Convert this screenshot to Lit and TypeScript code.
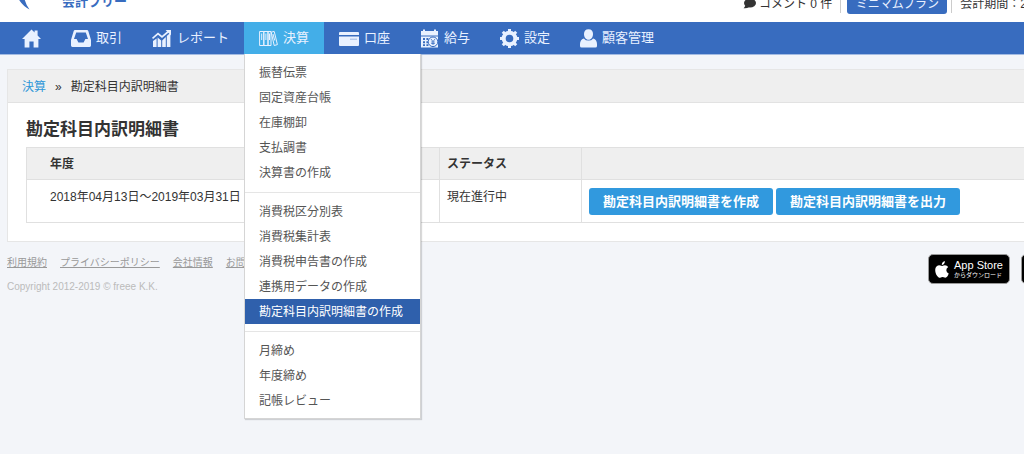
import { LitElement, html, css, svg } from "lit";
import { customElement, state } from "lit/decorators.js";

const glyphs = {
  home: {
    w: 19,
    art: svg`<path d="M9.5 0.5 L0 10 H2.6 V18.5 H7.4 V12.4 H11.6 V18.5 H16.4 V10 H19 L15.6 6.4 V1.6 H12.6 V3.5 Z"/>`,
  },
  tray: {
    w: 20,
    art: svg`<path fill-rule="evenodd" d="M4 1 H16 Q17 1 17.3 2 L20 11 V16.6 Q20 18 18.6 18 H1.4 Q0 18 0 16.6 V11 L2.7 2 Q3 1 4 1 Z M5.2 3.4 L3 10 H5.6 L7.4 13.4 H12.6 L14.4 10 H17 L14.8 3.4 Z"/>`,
  },
  chart: {
    w: 20,
    art: svg`<path d="M1 12 L4.6 9.4 V18 H1 Z M5.6 8.6 L9.2 11.400 V18 H5.6 Z M10.2 11.4 L13.8 8 V18 H10.2 Z M14.8 7 L18.4 3.8 V18 H14.8 Z"/>
      <path d="M0.5 9.4 L6 4.6 L10 8 L17 2" fill="none" stroke="currentColor" stroke-width="1.7"/>
      <path d="M13.6 1 H19 V6.4 Z"/>`,
  },
  books: {
    w: 19,
    art: svg`<g fill="none" stroke="currentColor" stroke-width="1">
      <path d="M.6 2.5 H4.8 V16.5 H.6 Z M4.8 2.5 H9 V16.5 H4.8 Z M9 2.5 H12 V16.5 H9 Z M12.2 3.2 L15.2 2.4 L18.4 15.6 L15.2 16.5 Z"/>
      <path d="M2.7 4.5 V11 M6.9 4.5 V11 M10.5 4.5 V11 M14 5 L15.7 11.5"/></g>`,
  },
  card: {
    w: 20,
    art: svg`<path d="M1 3 H19 Q20 3 20 4 V6 H0 V4 Q0 3 1 3 Z"/>
      <path d="M0 7.4 H20 V16 Q20 17 19 17 H1 Q0 17 0 16 Z"/>
      <path d="M11 10.2 H18" stroke="#9db8e4" stroke-width="1" fill="none"/>`,
  },
  payroll: {
    w: 19,
    art: svg`<path d="M1 2 H3 V.6 H5 V2 H14 V.6 H16 V2 H18 V6.4 H1 Z"/>
      <path fill-rule="evenodd" d="M1 7.4 H18 V18.4 H1 Z M3 9 V11 H5 V9 Z M6.4 9 V11 H8.4 V9 Z M3 12.2 V14.2 H5 V12.2 Z M3 15.2 V17 H5 V15.2 Z M6.4 12.2 V14.2 H8 V12.2 Z M6.4 15.2 V17 H8.4 V15.2 Z"/>
      <circle cx="13" cy="12.8" r="4.8" fill="#e9f1ff" stroke="#386cbf" stroke-width="1"/>
      <path d="M11 10 L13 12.6 L15 10 M13 12.6 V16 M11.2 13 H14.8 M11.2 14.5 H14.8" fill="none" stroke="#386cbf" stroke-width=".8"/>`,
  },
  gear: {
    w: 19,
    art: svg`<circle cx="9.5" cy="9.5" r="5.8" fill="none" stroke="currentColor" stroke-width="4"/>
      <path d="M9.5 0 V4 M9.5 15 V19 M0 9.5 H4 M15 9.5 H19 M2.8 2.8 L5 5 M14 14 L16.2 16.2 M16.2 2.8 L14 5 M5 14 L2.8 16.2" stroke="currentColor" stroke-width="3" fill="none"/>`,
  },
  user: {
    w: 17,
    art: svg`<path d="M8.5 0.2 C11.4 .2 13 2.2 13 5 C13 8 11.3 10.8 8.5 10.8 C5.7 10.8 4 8 4 5 C4 2.2 5.6 .2 8.5 .2 Z"/>
      <path d="M3.8 9.4 Q5.6 11.6 8.5 11.6 Q11.4 11.6 13.2 9.4 Q17 10.8 17 15 V17 Q17 18.6 15.4 18.6 H1.6 Q0 18.6 0 17 V15 Q0 10.8 3.8 9.4 Z"/>`,
  },
};

type GlyphName = keyof typeof glyphs;

const glyph = (name: GlyphName) => {
  const g = glyphs[name];
  return html`<svg class="glyph" width=${g.w} height="19" viewBox="0 0 ${g.w} 19" fill="currentColor" aria-hidden="true">${g.art}</svg>`;
};

const navItems: { icon: GlyphName; label: string; menu?: string[][] }[] = [
  { icon: "home", label: "" },
  { icon: "tray", label: "取引" },
  { icon: "chart", label: "レポート" },
  {
    icon: "books",
    label: "決算",
    menu: [
      ["振替伝票", "固定資産台帳", "在庫棚卸", "支払調書", "決算書の作成"],
      ["消費税区分別表", "消費税集計表", "消費税申告書の作成", "連携用データの作成", "勘定科目内訳明細書の作成"],
      ["月締め", "年度締め", "記帳レビュー"],
    ],
  },
  { icon: "card", label: "口座" },
  { icon: "payroll", label: "給与" },
  { icon: "gear", label: "設定" },
  { icon: "user", label: "顧客管理" },
];

@customElement("global-nav")
class GlobalNav extends LitElement {
  @state() private open = "決算";
  @state() private current = "勘定科目内訳明細書の作成";

  static styles = css`
    :host { display: block; }
    a { text-decoration: none; color: inherit; }
    .bar {
      display: flex;
      margin: 0;
      padding: 0 7px;
      list-style: none;
      background: #386cbf;
      border-bottom: 1px solid #a3bbe2;
      color: #e9f1ff;
    }
    .item { position: relative; }
    .tab {
      display: flex;
      align-items: center;
      gap: 5px;
      height: 32px;
      padding: 0 15px;
      font-size: 13px;
      line-height: 20px;
      white-space: nowrap;
    }
    .tab.open { background: #43aee8; }
    .glyph { flex: none; display: block; }
    .menu {
      position: absolute;
      z-index: 2;
      top: 100%;
      left: 0;
      box-sizing: border-box;
      min-width: 177px;
      padding: 6px 0 5px;
      background: #fff;
      border: 1px solid #d5d5d5;
      border-top: 0;
      box-shadow: 1px 1px 1px rgba(0, 0, 0, 0.15);
      color: #555;
    }
    .group { margin: 0; padding: 0; list-style: none; }
    .group + .group {
      margin-top: 7px;
      padding-top: 6px;
      border-top: 1px solid #e5e5e5;
    }
    .entry {
      display: block;
      padding: 2px 14px 0;
      font-size: 12px;
      line-height: 23px;
      white-space: nowrap;
    }
    .entry.current { background: #2f60ac; color: #fff; }
  `;

  render() {
    return html`<nav>
      <ul class="bar">
        ${navItems.map(
          (n) => html`<li class="item">
            <a href="#" class="tab ${n.label === this.open ? "open" : ""}" aria-label=${n.label || "ホーム"}
              >${glyph(n.icon)}${n.label ? html`<span>${n.label}</span>` : null}</a>
            ${n.menu && n.label === this.open
              ? html`<div class="menu">
                  ${n.menu.map(
                    (g) => html`<ul class="group">
                      ${g.map(
                        (e) => html`<li><a href="#" class="entry ${e === this.current ? "current" : ""}"
                          @click=${() => (this.current = e)}>${e}</a></li>`
                      )}
                    </ul>`
                  )}
                </div>`
              : null}
          </li>`
        )}
      </ul>
    </nav>`;
  }
}

@customElement("app-root")
class AppRoot extends LitElement {
  static styles = css`
    :host {
      display: block;
      min-height: 100vh;
      overflow-x: clip;
      background: #f3f5f9;
      color: #333;
      font-family: "Liberation Sans", "Noto Sans CJK JP", sans-serif;
      font-size: 12px;
      line-height: 18px;
    }
    .page { min-width: 1130px; }
    .top {
      display: flex;
      align-items: flex-end;
      justify-content: space-between;
      height: 22px;
      overflow: hidden;
      background: #fff;
    }
    .brand {
      display: flex;
      align-items: flex-end;
      gap: 22px;
      padding: 0 0 11px 10px;
      color: #386cbf;
      text-decoration: none;
    }
    .brand-name { font-size: 13px; font-weight: bold; line-height: 18px; }
    .tools {
      display: flex;
      align-items: center;
      width: 387px;
      padding-bottom: 8px;
      white-space: nowrap;
    }
    .comments { display: flex; align-items: center; gap: 3px; padding-right: 8px; border-right: 1px solid #ccc; }
    .plan {
      margin: 0 4px 0 6px;
      padding: 2px 0 0;
      width: 100px;
      height: 22px;
      border: 0;
      border-radius: 3px;
      background: #386cbf;
      color: #e9f1ff;
      font: inherit;
    }
    .period { padding-left: 8px; border-left: 1px solid #ccc; }
    .comments, .period { padding-top: 2px; }
    .main { padding: 14px 7px 0; }
    .panel { border: 1px solid #e6e6e6; background: #fff; }
    .crumbs {
      padding: 8px 14px 6px;
      background: #efefef;
      border-bottom: 1px solid #e2e2e2;
    }
    .crumbs a { color: #2e97d8; text-decoration: none; }
    .sep { padding: 0 9px; }
    .body { padding: 15px 18px 18px; }
    h1 { margin: 0 0 5px; font-size: 17px; line-height: 24px; }
    table { width: 100%; table-layout: fixed; border-collapse: collapse; }
    th, td {
      padding: 7px;
      border: 1px solid #e0e0e0;
      text-align: left;
      vertical-align: top;
    }
    th { background: #efefef; padding-bottom: 6px; }
    td { background: #fff; padding-top: 8px; }
    .year { width: 382px; padding-left: 23px; }
    .status { width: 127px; }
    .actions { display: flex; gap: 3px; }
    .action {
      height: 27px;
      padding: 0 14px;
      border: 0;
      border-radius: 3px;
      background: #3199de;
      color: #fff;
      font: bold 13px/20px "Liberation Sans", "Noto Sans CJK JP", sans-serif;
      white-space: nowrap;
    }
    .footer {
      display: flex;
      justify-content: space-between;
      align-items: flex-start;
      padding: 12px 7px;
      font-size: 10px;
      color: #bbb;
    }
    .links { display: flex; gap: 13px; margin-bottom: 6px; }
    .links a { color: #999; }
    .stores { display: flex; gap: 11px; }
    .store {
      display: flex;
      align-items: center;
      gap: 5px;
      box-sizing: border-box;
      width: 82px;
      height: 30px;
      padding: 0 6px;
      border: 1px solid #999;
      border-radius: 5px;
      background: #000;
      color: #fff;
      text-decoration: none;
      white-space: nowrap;
    }
    .store.wide { width: 102px; }
    .store-text { display: flex; flex-direction: column; }
    .store-name { font-size: 11px; line-height: 12px; }
    .store-note { font-size: 6px; line-height: 8px; }
  `;

  render() {
    return html`<div class="page">
      <header class="top">
        <a class="brand" href="#">
          <svg width="30" height="32" viewBox="0 0 30 32" fill="currentColor" aria-hidden="true">
            <path d="M2 2 Q11 6 14 14 L26 2 Q20 12 14.500 20 Q16 26 19.500 30.500 Q13 27 9.500 21.500 Q8 17 2 2 Z" />
          </svg>
          <span class="brand-name">会計フリー</span>
        </a>
        <div class="tools">
          <span class="comments">
            <svg width="13" height="12" viewBox="0 0 13 12" fill="#333" aria-hidden="true">
              <ellipse cx="7" cy="5" rx="6" ry="4.500" />
              <path d="M2 7 Q2.4 9 .6 10.200 Q4 10.600 6 9 Z" />
            </svg>
            コメント 0 件
          </span>
          <button class="plan">ミニマムプラン</button>
          <span class="period">会計期間：2018年度</span>
        </div>
      </header>
      <global-nav></global-nav>
      <main class="main">
        <section class="panel">
          <div class="crumbs"><a href="#">決算</a><span class="sep">»</span>勘定科目内訳明細書</div>
          <div class="body">
            <h1>勘定科目内訳明細書</h1>
            <table>
              <thead>
                <tr><th class="year">年度</th><th class="status">ステータス</th><th></th></tr>
              </thead>
              <tbody>
                <tr>
                  <td class="year">2018年04月13日～2019年03月31日</td>
                  <td>現在進行中</td>
                  <td>
                    <div class="actions">
                      <button class="action">勘定科目内訳明細書を作成</button>
                      <button class="action">勘定科目内訳明細書を出力</button>
                    </div>
                  </td>
                </tr>
              </tbody>
            </table>
          </div>
        </section>
      </main>
      <footer class="footer">
        <div>
          <div class="links">
            <a href="#">利用規約</a><a href="#">プライバシーポリシー</a><a href="#">会社情報</a><a href="#">お問い合わせ</a>
          </div>
          <div>Copyright 2012-2019 © freee K.K.</div>
        </div>
        <div class="stores">
          <a class="store" href="#">
            <svg width="14" height="17" viewBox="0 0 14 17" fill="currentColor" aria-hidden="true">
              <path d="M9.8 0 Q10 2 8.900 3.100 Q8 4 6.800 4 Q6.700 2.500 7.700 1.300 Q8.700 .2 9.800 0 Z M7.200 5 Q8.500 4.200 10 4.200 Q12 4.300 13.200 6 Q11.200 7.200 11.300 9.200 Q11.400 11.500 13.700 12.500 Q12.500 16.300 10.400 16.700 Q9.500 16.700 8.700 16.300 Q7.300 15.700 5.800 16.400 Q4.600 17 3.700 16.500 Q.2 13.700 .2 9 Q.4 4.700 4 4.300 Q5.300 4.300 7.200 5 Z" />
            </svg>
            <span class="store-text"><span class="store-name">App Store</span><span class="store-note">からダウンロード</span></span>
          </a>
          <a class="store wide" href="#" aria-label="Google Play"></a>
        </div>
      </footer>
    </div>`;
  }
}
